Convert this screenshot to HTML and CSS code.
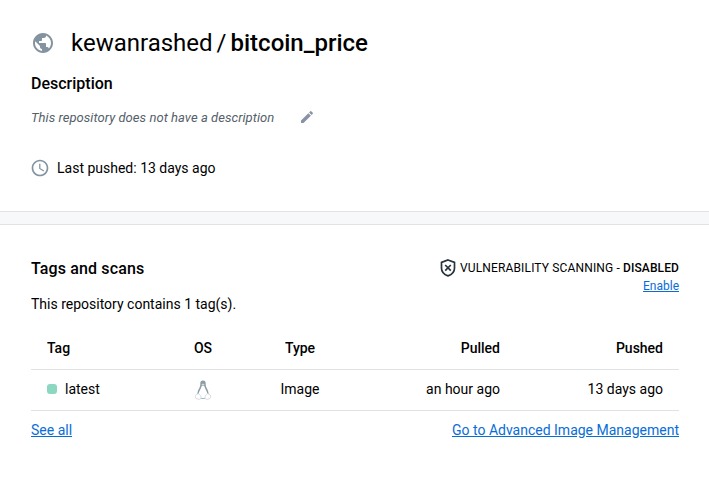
FILE: index.html
```html
<!DOCTYPE html>
<html lang="en">
<head>
<meta charset="utf-8">
<title>kewanrashed/bitcoin_price</title>
<link rel="stylesheet" href="styles.css">
</head>
<body>
<section class="summary">
  <div class="title">
    <svg class="globe" viewBox="0 0 24 24"><path d="M12 2C6.48 2 2 6.48 2 12s4.48 10 10 10 10-4.48 10-10S17.52 2 12 2zm-1 17.93c-3.95-.49-7-3.85-7-7.93 0-.62.08-1.21.21-1.79L9 15v1c0 1.1.9 2 2 2v1.93zm6.9-2.54c-.26-.81-1-1.39-1.9-1.39h-1v-3c0-.55-.45-1-1-1H8v-2h2c.55 0 1-.45 1-1V7h2c1.1 0 2-.9 2-2v-.41c2.93 1.19 5 4.06 5 7.41 0 2.08-.8 3.97-2.1 5.39z"/></svg>
    <h1><span class="owner">kewanrashed</span><span class="slash">/</span><b>bitcoin_price</b></h1>
  </div>
  <h2>Description</h2>
  <div class="description">
    <em>This repository does not have a description</em>
    <svg class="pencil" viewBox="0 0 24 24"><path d="M3 17.25V21h3.75L17.81 9.94l-3.75-3.75L3 17.25zM20.71 7.04c.39-.39.39-1.02 0-1.41l-2.34-2.34a1 1 0 0 0-1.41 0l-1.83 1.83 3.75 3.75 1.83-1.83z"/></svg>
  </div>
  <div class="pushed">
    <svg class="clock" viewBox="0 0 24 24"><path d="M11.99 2C6.47 2 2 6.48 2 12s4.47 10 9.99 10C17.52 22 22 17.52 22 12S17.52 2 11.99 2zM12 20c-4.42 0-8-3.58-8-8s3.58-8 8-8 8 3.58 8 8-3.58 8-8 8zm.5-13H11v6l5.25 3.15.75-1.23-4.5-2.67z"/></svg>
    <span>Last pushed: 13 days ago</span>
  </div>
</section>
<div class="band"></div>
<section class="tags">
  <div class="tags-head">
    <h2>Tags and scans</h2>
    <div class="scan">
      <div class="scan-status">
        <svg class="shield" viewBox="0 0 16 18"><path d="M8 1 14.500 3.400v5.800c0 3.600-2.700 6.300-6.500 7.700-3.800-1.400-6.500-4.100-6.500-7.700V3.400z"/><path d="m5.200 6 5.600 5.600m0-5.600-5.600 5.600"/></svg>
        <span>VULNERABILITY SCANNING - <b>DISABLED</b></span>
      </div>
      <a href="#">Enable</a>
    </div>
  </div>
  <p>This repository contains 1 tag(s).</p>
  <table>
    <colgroup><col class="c-tag"><col class="c-os"><col class="c-type"><col class="c-pulled"><col class="c-pushed"></colgroup>
    <thead><tr><th>Tag</th><th class="mid">OS</th><th class="mid">Type</th><th class="end">Pulled</th><th class="end">Pushed</th></tr></thead>
    <tbody><tr>
      <td><span class="tag"><i class="dot"></i>latest</span></td>
      <td class="mid"><svg class="linux" viewBox="0 0 16 20">
        <path class="body" d="M8 .4C6.200.4 5.200 1.600 5.300 3.600c.1 2-.2 3-1.100 4.600C3.100 10.300 2.300 12 2.400 14.500c.2 2.800 2.400 4.400 5.600 4.400s5.400-1.600 5.600-4.400c.1-2.500-.7-4.200-1.800-6.300-.9-1.600-1.200-2.600-1.100-4.600C10.800 1.600 9.800.4 8 .4z"/>
        <path class="belly" d="M8 5.800c-1 0-1.600.6-1.900 1.900-.6 2.100-2.400 3.600-2.400 6.500 0 2.400 1.800 4 4.300 4s4.300-1.600 4.300-4c0-2.900-1.800-4.400-2.400-6.500C9.600 6.400 9 5.800 8 5.800z"/>
        <path class="beak" d="m6.300 4.400 1.700-.9 1.700.9L8 5.800z"/>
        <path class="foot" d="M3.300 13.500c-.8 1.100-2.600.5-2.700 2-.1 1.200-.5 2.700.5 3 1.400.4 3.400 1.400 4.600.1 1.300-1.400-1-4.500-2.400-5.100zM12.700 13.500c.8 1.100 2.600.5 2.700 2 .1 1.200.5 2.700-.5 3-1.400.4-3.400 1.400-4.600.1-1.300-1.400 1-4.500 2.400-5.100z"/>
      </svg></td>
      <td class="mid">Image</td><td class="end">an hour ago</td><td class="end">13 days ago</td>
    </tr></tbody>
  </table>
  <div class="links"><a href="#">See all</a><a href="#">Go to Advanced Image Management</a></div>
</section>
</body>
</html>
```

FILE: styles.css
```css
* { box-sizing: border-box; }
body { margin: 0; background: #fff; color: #000; font: 14px/20px Roboto, sans-serif; }
h1, h2, p { margin: 0; }
svg { display: block; flex: none; }
b { font-weight: 500; }
a { color: #086dd7; text-decoration: underline; }
h2 { font-size: 16px; line-height: 24px; font-weight: 500; }
.summary { height: 211px; padding: 27px 30px 0 31px; }
.title { display: flex; align-items: center; height: 32px; gap: 16px; }
.globe { width: 24px; height: 24px; fill: #8393a0; }
h1 { font-size: 24px; line-height: 32px; font-weight: 400; }
.slash { margin: 0 4px; }
.summary h2 { margin-top: 13px; }
.description { display: flex; align-items: center; height: 20px; margin-top: 12px; gap: 25px; }
.description em { font-size: 13px; letter-spacing: .05px; color: #556069; }
.pencil { width: 16px; height: 16px; margin-bottom: 3px; fill: #8993a5; }
.pushed { display: flex; align-items: center; height: 20px; margin: 30px 0 0 -1px; gap: 7px; }
.clock { width: 20px; height: 20px; fill: #8393a0; }
.band { height: 14px; background: #f7f8fa; border: solid #e1e2e6; border-width: 1px 0; }
.tags { padding: 32px 30px 0 31px; }
.tags-head { display: flex; justify-content: space-between; height: 37px; }
.tags-head h2 { letter-spacing: .13px; }
.scan { display: flex; flex-direction: column; align-items: flex-end; font-size: 12px; line-height: 18px; padding-top: 2px; }
.scan-status { display: flex; align-items: center; gap: 4px; height: 18px; letter-spacing: .15px; }
.scan-status b { letter-spacing: .1px; }
.shield { width: 16px; height: 18px; fill: none; stroke: #27343b; stroke-width: 1.7; }
table { width: 648px; table-layout: fixed; border-collapse: separate; border-spacing: 0; margin-top: 14px; }
th, td { height: 41px; padding: 0 16px 2px; text-align: left; border-bottom: 1px solid #e1e2e6; }
th { height: 42px; font-weight: 500; }
.mid { text-align: center; }
.end { text-align: right; }
.c-tag { width: 123px; }
.c-os { width: 98px; }
.c-type { width: 96px; }
.c-pulled { width: 168px; }
.c-pushed { width: 163px; }
.tag { display: flex; align-items: center; gap: 8px; }
.dot { width: 10px; height: 10px; border-radius: 3px; background: #8bd7c0; }
.linux { width: 16px; height: 20px; margin: 1px auto 0; }
.body { fill: #8c9da8; }
.belly { fill: #fff; }
.beak { fill: #d3dadf; }
.foot { fill: #fff; stroke: #c9d1d7; stroke-width: .8; }
.links { display: flex; justify-content: space-between; margin-top: 9px; }
```
